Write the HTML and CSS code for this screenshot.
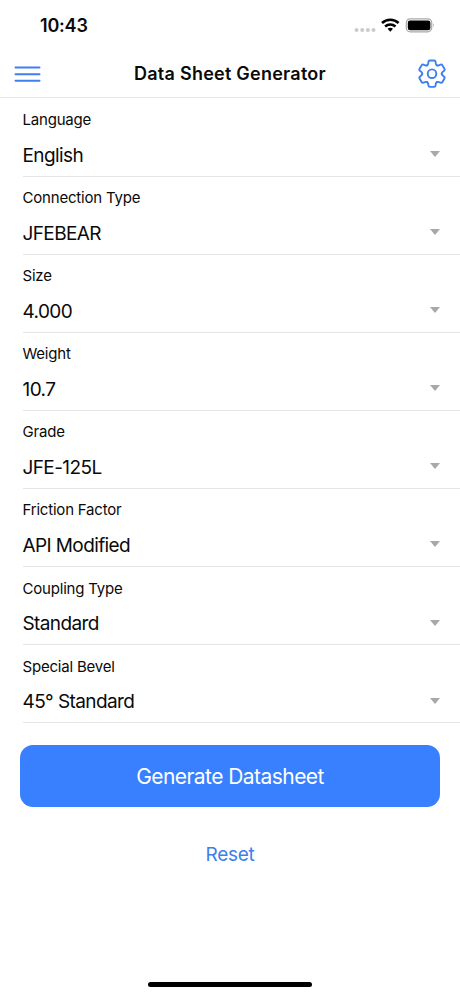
FILE: index.html
```html
<!DOCTYPE html>
<html lang="en">
<head>
    <meta charset="UTF-8">
    <meta name="viewport" content="width=device-width, initial-scale=1.0">
    <title>Data Sheet Generator</title>
    <link rel="stylesheet" href="styles.css">
</head>
<body>
    <!-- Status Bar -->
    <div class="status-bar">
        <span class="time">10:43</span>
        <svg class="status-icons" width="84" height="18" viewBox="0 0 84 18">
            <g fill="#cbcbcb">
                <circle cx="4.5" cy="13" r="2"/>
                <circle cx="10.2" cy="13" r="2"/>
                <circle cx="15.9" cy="13" r="2"/>
                <circle cx="21.5" cy="13" r="2"/>
            </g>
            <g fill="none" stroke="#000" stroke-width="2.6">
                <path d="M30 6a12.300 12.300 0 0 1 16.600 0"/>
                <path d="M33.100 9.500a7.900 7.900 0 0 1 10.400 0"/>
            </g>
            <path d="M35.600 11.800a4.300 4.300 0 0 1 5.400 0L38.300 14.700z"/>
            <rect x="54.300" y="1.800" width="25.400" height="13" rx="4" fill="#fff" stroke="#aaa" stroke-width="1.200"/>
            <rect x="55.800" y="3.400" width="22.600" height="9.800" rx="2.300"/>
            <path d="M81.200 6.300q1.800 2.100 0 4.200z" fill="#999"/>
        </svg>
    </div>

    <!-- Header -->
    <header>
        <button class="icon-button" aria-label="Menu">
            <svg width="28" height="28" viewBox="0 0 28 28" fill="none" stroke="#3d7fee" stroke-width="2" stroke-linecap="round">
                <path d="M2.500 7.500h24M2.500 14.200h24M2.500 20.700h24"/>
            </svg>
        </button>
        <h1>Data Sheet Generator</h1>
        <button class="icon-button" aria-label="Settings">
            <svg width="30" height="30" viewBox="-15 -14.700 30 30" fill="none" stroke="#3d7fee" stroke-width="1.900" stroke-linecap="round" stroke-linejoin="round">
                <defs>
                    <path id="tooth" d="M-4.850-8.400Q-4.100-8.850-3.800-10.200L-3.500-12Q-3.300-13.200-2.300-13.200H2.300Q3.300-13.200 3.500-12L3.800-10.200Q4.100-8.850 4.850-8.400"/>
                </defs>
                <use href="#tooth"/>
                <use href="#tooth" transform="rotate(60)"/>
                <use href="#tooth" transform="rotate(120)"/>
                <use href="#tooth" transform="rotate(180)"/>
                <use href="#tooth" transform="rotate(240)"/>
                <use href="#tooth" transform="rotate(300)"/>
                <circle r="4.300"/>
            </svg>
        </button>
    </header>

    <!-- Form -->
    <main>
        <div class="field">
            <span class="label">Language</span>
            <div class="select"><span class="value">English</span><i class="arrow"></i></div>
        </div>
        <div class="field">
            <span class="label">Connection Type</span>
            <div class="select"><span class="value">JFEBEAR</span><i class="arrow"></i></div>
        </div>
        <div class="field">
            <span class="label">Size</span>
            <div class="select"><span class="value">4.000</span><i class="arrow"></i></div>
        </div>
        <div class="field">
            <span class="label">Weight</span>
            <div class="select"><span class="value">10.7</span><i class="arrow"></i></div>
        </div>
        <div class="field">
            <span class="label">Grade</span>
            <div class="select"><span class="value">JFE-125L</span><i class="arrow"></i></div>
        </div>
        <div class="field">
            <span class="label">Friction Factor</span>
            <div class="select"><span class="value">API Modified</span><i class="arrow"></i></div>
        </div>
        <div class="field">
            <span class="label">Coupling Type</span>
            <div class="select"><span class="value">Standard</span><i class="arrow"></i></div>
        </div>
        <div class="field">
            <span class="label">Special Bevel</span>
            <div class="select"><span class="value">45° Standard</span><i class="arrow"></i></div>
        </div>
    </main>

    <!-- Actions -->
    <div class="actions">
        <button class="generate">Generate Datasheet</button>
        <button class="reset">Reset</button>
    </div>

    <div class="home-indicator"></div>
</body>
</html>
```
FILE: styles.css
```css
* {
    box-sizing: border-box;
}

body {
    font-family: 'Inter', sans-serif;
    margin: 0;
    height: 996px;
    background-color: #fff;
    color: #0a0a0a;
    display: flex;
    flex-direction: column;
    overflow: hidden;
}

button {
    font-family: inherit;
    border: none;
    background: none;
    padding: 0;
    cursor: pointer;
}

/* Status Bar */
.status-bar {
    height: 50px;
    padding: 14px 24px 0 40px;
    display: flex;
    justify-content: space-between;
}

.time {
    font-size: 18px;
    font-weight: 600;
    line-height: 24px;
    letter-spacing: -0.2px;
}

.status-icons {
    margin-top: 3px;
}

/* Header */
header {
    height: 48px;
    padding: 0 13px;
    border-bottom: 1px solid #e8e8e8;
    display: flex;
    justify-content: space-between;
    align-items: center;
}

header h1 {
    margin: 0;
    padding-left: 2px;
    font-size: 18px;
    font-weight: 600;
    letter-spacing: 0.25px;
}

.icon-button {
    display: flex;
}

/* Form */
main {
    padding-top: 0.5px;
}

.field {
    height: 78.1px;
    margin-left: 22.5px;
    padding-top: 10.5px;
    border-bottom: 1px solid #e6e6e6;
}

.label {
    display: block;
    font-size: 15px;
    line-height: 22px;
    letter-spacing: -0.2px;
}

.select {
    height: 48px;
    padding-right: 20px;
    display: flex;
    justify-content: space-between;
    align-items: center;
}

.value {
    padding-top: 1px;
    font-size: 19px;
    line-height: 24px;
    letter-spacing: -0.6px;
}

.arrow {
    margin-bottom: 2px;
    border: 5.5px solid transparent;
    border-width: 6px 5.5px 0;
    border-top-color: #a8a8a8;
}

/* Actions */
.actions {
    padding: 22px 20px 0;
    display: flex;
    flex-direction: column;
    align-items: center;
}

.generate {
    width: 100%;
    height: 62px;
    padding-top: 1px;
    border-radius: 13px;
    background-color: #3880ff;
    color: #fff;
    font-size: 21px;
    letter-spacing: -0.55px;
}

.reset {
    margin-top: 36px;
    color: #3d7fee;
    font-size: 19px;
    line-height: 24px;
    letter-spacing: -0.3px;
}

.home-indicator {
    width: 164px;
    height: 5px;
    margin: auto auto 9px;
    border-radius: 3px;
    background-color: #000;
}
```
